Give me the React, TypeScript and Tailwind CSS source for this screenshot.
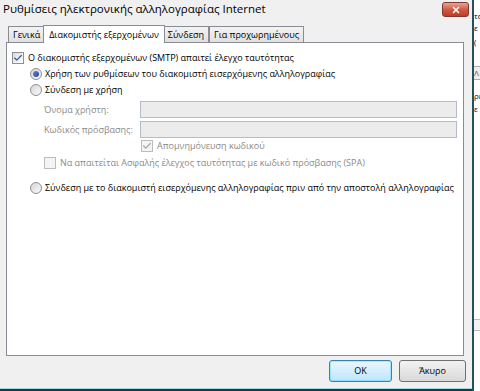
import { Check, X } from 'lucide-react';

const FONT = { fontFamily: '"Open Sans", "Noto Sans", sans-serif' };

function CheckBox({ checked, disabled }: { checked?: boolean; disabled?: boolean }) {
  return (
    <span
      className={`flex h-[12px] w-[12px] shrink-0 items-center justify-center border bg-gradient-to-br ${
        disabled ? 'border-[#bcbcbc] from-[#f4f4f4] to-[#f4f4f4]' : 'border-[#8e8f8f] from-[#dcdcdc] to-[#ffffff]'
      }`}
    >
      {checked && (
        <Check size={10} strokeWidth={3} className={disabled ? 'text-[#a8a8a8]' : 'text-[#3c57a6]'} />
      )}
    </span>
  );
}

function Radio({ checked }: { checked?: boolean }) {
  return (
    <span className="flex h-[12px] w-[12px] shrink-0 items-center justify-center rounded-full border border-[#8e8f8f] bg-gradient-to-br from-[#d6d6d6] to-[#fafafa]">
      {checked && <span className="h-[6px] w-[6px] rounded-full bg-gradient-to-br from-[#6a8fd3] to-[#1c3f95]" />}
    </span>
  );
}

function Tab({ label, active }: { label: string; active?: boolean }) {
  return active ? (
    <div className="relative z-10 -mb-px -mx-[2px] flex h-[18px] items-center border border-b-0 border-[#898c95] bg-white px-[5px] text-[9px] text-black">
      {label}
    </div>
  ) : (
    <div className="flex h-[16px] items-center border border-b-0 border-[#898c95] bg-gradient-to-b from-[#f3f3f3] to-[#e0e0e0] px-[4px] text-[9px] text-black">
      {label}
    </div>
  );
}

function Field({ label }: { label: string }) {
  return (
    <div className="flex h-[17px] items-center">
      <span className="w-[96px] text-[9px] text-[#8a8a8a]">{label}</span>
      <div className="h-[17px] flex-1 border border-[#b3bcc7] bg-[#ececec]" />
    </div>
  );
}

export default function App() {
  return (
    <div className="flex h-[391px] w-[480px] overflow-hidden bg-white" style={FONT}>
      {/* Dialog */}
      <div className="flex h-full w-[472px] flex-col bg-[#f0f0f0]">
        <div className="flex flex-1 flex-col">
          {/* Title bar */}
          <div className="flex h-[22px] items-start justify-between pl-[3px] pr-[3px] pt-[2px]">
            <span className="text-[11.5px] leading-[14px] text-black">Ρυθμίσεις ηλεκτρονικής αλληλογραφίας Internet</span>
            <div className="flex h-[15px] w-[27px] items-center justify-center rounded-[3px] border border-[#7c3a32] bg-gradient-to-b from-[#e8a394] via-[#d25a43] to-[#c23b22]">
              <X size={10} strokeWidth={3.5} className="text-white" />
            </div>
          </div>

          {/* Tabs */}
          <div className="mt-[3px] flex items-end pl-[8px]">
            <Tab label="Γενικά" />
            <Tab label="Διακομιστής εξερχομένων" active />
            <Tab label="Σύνδεση" />
            <Tab label="Για προχωρημένους" />
          </div>

          {/* Panel */}
          <div className="ml-[6px] mr-[8px] flex h-[314px] flex-col border border-[#898c95] bg-white pl-[5px] pr-[6px] pt-[7px] text-[9px] text-black">
            <label className="flex h-[16px] items-center gap-[4px]">
              <CheckBox checked />
              <span>Ο διακομιστής εξερχομένων (SMTP) απαιτεί έλεγχο ταυτότητας</span>
            </label>

            <div className="flex h-[16px] items-center gap-[3px] pl-[18px]">
              <Radio checked />
              <span>Χρήση των ρυθμίσεων του διακομιστή εισερχόμενης αλληλογραφίας</span>
            </div>
            <div className="flex h-[16px] items-center gap-[3px] pl-[18px]">
              <Radio />
              <span>Σύνδεση με χρήση</span>
            </div>

            <div className="mt-[3px] flex flex-col gap-[3px] pl-[32px]">
              <Field label="Όνομα χρήστη:" />
              <Field label="Κωδικός πρόσβασης:" />
            </div>

            <div className="flex h-[16px] items-center gap-[4px] pl-[129px] text-[#8a8a8a]">
              <CheckBox checked disabled />
              <span>Απομνημόνευση κωδικού</span>
            </div>
            <div className="mt-[1px] flex h-[16px] items-center gap-[4px] pl-[32px] text-[#8a8a8a]">
              <CheckBox disabled />
              <span>Να απαιτείται Ασφαλής έλεγχος ταυτότητας με κωδικό πρόσβασης (SPA)</span>
            </div>

            <div className="mt-[9px] flex h-[16px] items-center gap-[3px] pl-[18px]">
              <Radio />
              <span>Σύνδεση με το διακομιστή εισερχόμενης αλληλογραφίας πριν από την αποστολή αλληλογραφίας</span>
            </div>
          </div>

          {/* Buttons */}
          <div className="mt-[4px] flex justify-end gap-[7px] pr-[6px] text-[9px]">
            <button className="h-[22px] w-[63px] rounded-[3px] border border-[#3c7fb1] bg-gradient-to-b from-[#eaf6fd] to-[#bee6fd] shadow-[inset_0_0_0_1px_#48d1ff66]">
              OK
            </button>
            <button className="h-[22px] w-[67px] rounded-[3px] border border-[#707070] bg-gradient-to-b from-[#f2f2f2] to-[#d9d9d9]">
              Άκυρο
            </button>
          </div>
        </div>
        <div className="h-[1px] bg-[#9fd9e3]" />
        <div className="h-[2px] bg-[#1b3a44]" />
      </div>

      {/* Window behind, right edge */}
      <div className="flex h-full w-[8px] border-l-2 border-[#25505e]">
        <div className="flex flex-1 flex-col overflow-hidden whitespace-nowrap bg-white text-[8px] leading-[12px] text-black">
          <span className="mt-[10px] h-[12px]">το</span>
          <span className="h-[12px]">ε</span>
          <span className="mt-[2px] h-[12px]">(</span>
          <div className="mt-[18px] h-[14px] border-y border-[#aaa] bg-[#eee] leading-[12px] text-[#555]">Λ</div>
          <span className="mt-[10px] h-[12px]">ρε</span>
          <span className="mt-[1px] h-[12px]">ε</span>
          <div className="mb-[60px] mt-auto h-[12px] border-y border-[#bbb] bg-[#f3f3f3]" />
        </div>
      </div>
    </div>
  );
}
